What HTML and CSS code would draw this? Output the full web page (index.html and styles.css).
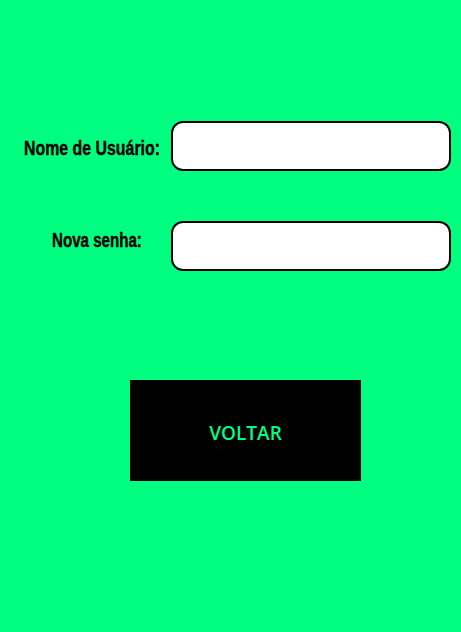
FILE: index.html
```html
<!DOCTYPE html>
<html lang="pt-BR">
<head>
<meta charset="utf-8">
<title>Nova senha</title>
<link rel="stylesheet" href="styles.css">
</head>
<body>
<main class="page">
  <form class="form">
    <div class="row">
      <label class="label label-user" for="user"><span class="narrow">Nome de Usuário:</span></label>
      <input class="field" id="user" type="text">
    </div>
    <div class="row">
      <label class="label label-pass" for="pass"><span class="narrow">Nova senha:</span></label>
      <input class="field" id="pass" type="password">
    </div>
  </form>
  <button class="back" type="button">VOLTAR</button>
</main>
</body>
</html>
```
FILE: styles.css
```css
html, body {
  margin: 0;
  padding: 0;
  background: #00ff80;
  height: 100%;
}
.page {
  display: flex;
  flex-direction: column;
  padding-top: 121px;
}
.form {
  display: flex;
  flex-direction: column;
  gap: 50px;
}
.row {
  display: flex;
  align-items: flex-start;
  height: 50px;
}
.label {
  font-family: "Liberation Sans", Arial, sans-serif;
  font-weight: 700;
  font-size: 19.5px;
  line-height: 22px;
  white-space: nowrap;
  color: #000;
  -webkit-text-stroke: 0.4px #000;
  box-sizing: border-box;
  width: 171px;
  flex: none;
}
.narrow {
  display: inline-block;
  transform: scaleX(0.775);
  transform-origin: left center;
}
.label-user {
  padding-left: 24px;
  padding-top: 16px;
}
.label-user .narrow {
  transform: scaleX(0.815);
}
.label-pass {
  padding-left: 52px;
  padding-top: 8px;
}
.field {
  box-sizing: border-box;
  width: 280px;
  height: 50px;
  margin: 0;
  border: 2px solid #000;
  border-radius: 12px;
  background: #fff;
  outline: none;
  padding: 0 10px;
}
.back {
  align-self: flex-start;
  margin-left: 130px;
  margin-top: 109px;
  width: 231px;
  height: 101px;
  border: none;
  background: #000;
  color: #00ff80;
  font-family: "Open Sans", sans-serif;
  font-weight: 600;
  font-size: 19px;
  padding: 5px 0 0;
  cursor: pointer;
}
```
